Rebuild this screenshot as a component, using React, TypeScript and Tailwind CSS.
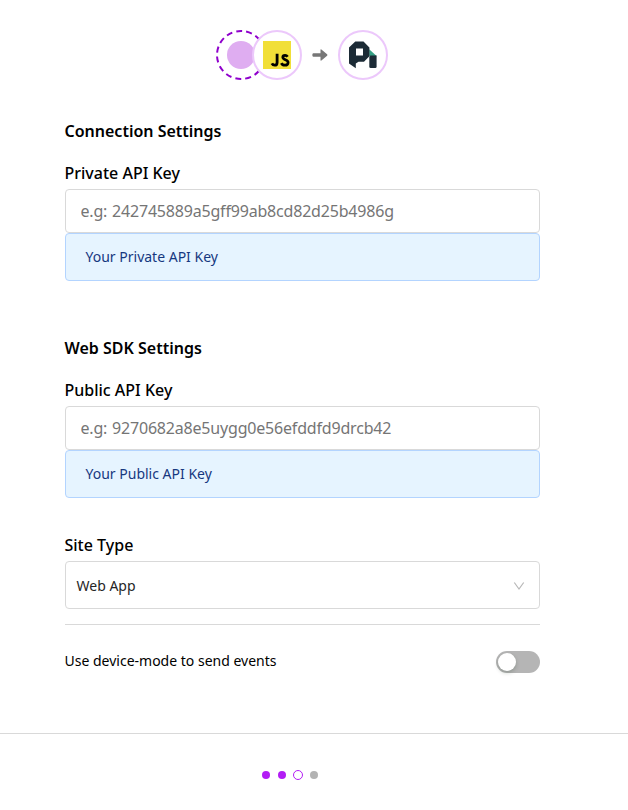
import React from "react";

function SourceIcons() {
  return (
    <div className="flex h-[50px] items-center pl-[216px]">
      <svg width="50" height="50" viewBox="0 0 50 50" className="shrink-0">
        <circle cx="25" cy="25" r="24" fill="#fff" stroke="#8f00cc" strokeWidth="2" strokeDasharray="6 4.05" strokeDashoffset="3" />
        <circle cx="25" cy="25" r="14" fill="#dfadf1" />
      </svg>
      <div className="relative -ml-[14px] flex size-[50px] shrink-0 items-center justify-center rounded-full border-2 border-[#ecc8fb] bg-white">
        <svg width="28" height="28" viewBox="0 0 28 28">
          <path d="M0 0h28v28H0z" fill="#f1df38" />
          <path d="M14.1 12.8v8.6c0 1.9-.8 2.8-2.4 2.8-1.3 0-2.2-.7-2.8-1.9" fill="none" stroke="#000" strokeWidth="2.8" />
          <path d="M24.6 15.7c-.6-.9-1.4-1.4-2.5-1.4-1.4 0-2.3.7-2.3 1.9 0 2.9 5.3 2 5.3 5.2 0 1.8-1.3 2.8-3.2 2.8-1.7 0-2.9-.7-3.6-2.1" fill="none" stroke="#000" strokeWidth="2.7" />
        </svg>
      </div>
      <svg width="16" height="12" viewBox="0 0 16 12" className="ml-[10px] shrink-0">
        <path d="M1.3 4.2H8.5V1q0-1 .9-.5l5.7 4.8q.7.7 0 1.4L9.4 11.5q-.9.5-.9-.5V7.8H1.3Q.3 7.8.3 6T1.3 4.2Z" fill="#777" />
      </svg>
      <div className="ml-[10px] flex size-[50px] shrink-0 items-center justify-center rounded-full border-2 border-[#ecc8fb]">
        <svg width="28" height="28" viewBox="0 0 28 28">
          <path d="M20.2 8.3 27.6 15H20.2Z" fill="#35a085" />
          <path fillRule="evenodd" d="M6.3.6h8.2L20.4 6.4v8.8L15 20.8H9.5L6.8 22.6v4.6L0 22.4V6.6ZM7 7.6v6.8h7V7.6Z" fill="#1c2b36" />
          <path d="M21.4 14.6h6.2V25.8q0 1.3-1.3 1.3h-4.6q-1.4 0-1.4-1.3V15.8Z" fill="#1c2b36" />
        </svg>
      </div>
    </div>
  );
}

function KeyField({ title, label, placeholder, note }: { title: string; label: string; placeholder: string; note: string }) {
  return (
    <section>
      <h2 className="-ml-[0.5px] text-base font-semibold">{title}</h2>
      <label className="mt-[18px] block text-base font-medium">
        <span className="-ml-[0.5px] block">{label}</span>
        <input
          className="mt-1 block h-11 w-full rounded-[4px] border border-[#d9d9d9] px-[14.5px] text-base font-normal tracking-[-0.19px] [word-spacing:0.9px] outline-none placeholder:text-[#757575]"
          placeholder={placeholder}
        />
      </label>
      <div className="flex h-12 items-center rounded-[4px] border border-[#b3d4ff] bg-[#e6f4ff] px-[19.5px] text-sm text-[#16387f]">{note}</div>
    </section>
  );
}

export default function App() {
  return (
    <main className="h-[810px] w-full overflow-hidden bg-white pt-[30px] font-['Noto_Sans',sans-serif] text-black">
      <SourceIcons />
      <div className="ml-[65px] mt-[39px] w-[475px]">
        <KeyField title="Connection Settings" label="Private API Key" placeholder="e.g: 242745889a5gff99ab8cd82d25b4986g" note="Your Private API Key" />
        <div className="mt-[55px]">
          <KeyField title="Web SDK Settings" label="Public API Key" placeholder="e.g: 9270682a8e5uygg0e56efddfd9drcb42" note="Your Public API Key" />
        </div>
        <div className="-ml-[0.5px] mt-[35px] text-base font-medium">Site Type</div>
        <button className="mt-1 flex h-12 w-full items-center justify-between rounded-[4px] border border-[#d9d9d9] pl-[10.5px] pr-[14px] pt-0.5 text-sm text-[#262626]">
          Web App
          <svg width="12" height="10" viewBox="0 0 12 10" fill="none" stroke="#b8b8b8" strokeWidth="1.2">
            <path d="M1.3 1.5 6 8 10.7 1.5" />
          </svg>
        </button>
        <div className="mt-[15px] flex items-start justify-between border-t border-[#d9d9d9] pt-[26px]">
          <span className="-ml-[0.5px] text-sm">Use device-mode to send events</span>
          <button role="switch" aria-checked="false" className="flex h-[22px] w-11 items-center rounded-full bg-[#b5b5b5] px-0.5">
            <span className="size-[18px] rounded-full bg-white shadow-[0_2px_4px_rgba(0,35,11,0.2)]" />
          </button>
        </div>
      </div>
      <footer className="mt-[60px] flex items-start border-t border-[#d9d9d9] pl-[262px] pt-9">
        <div className="flex h-[10px] items-center">
          <span className="size-2 rounded-full bg-[#b31df5]" />
          <span className="ml-2 size-2 rounded-full bg-[#b31df5]" />
          <span className="ml-[7px] size-[10px] rounded-full border border-[#b31df5]" />
          <span className="ml-[7px] size-2 rounded-full bg-[#b3b3b3]" />
        </div>
      </footer>
    </main>
  );
}
